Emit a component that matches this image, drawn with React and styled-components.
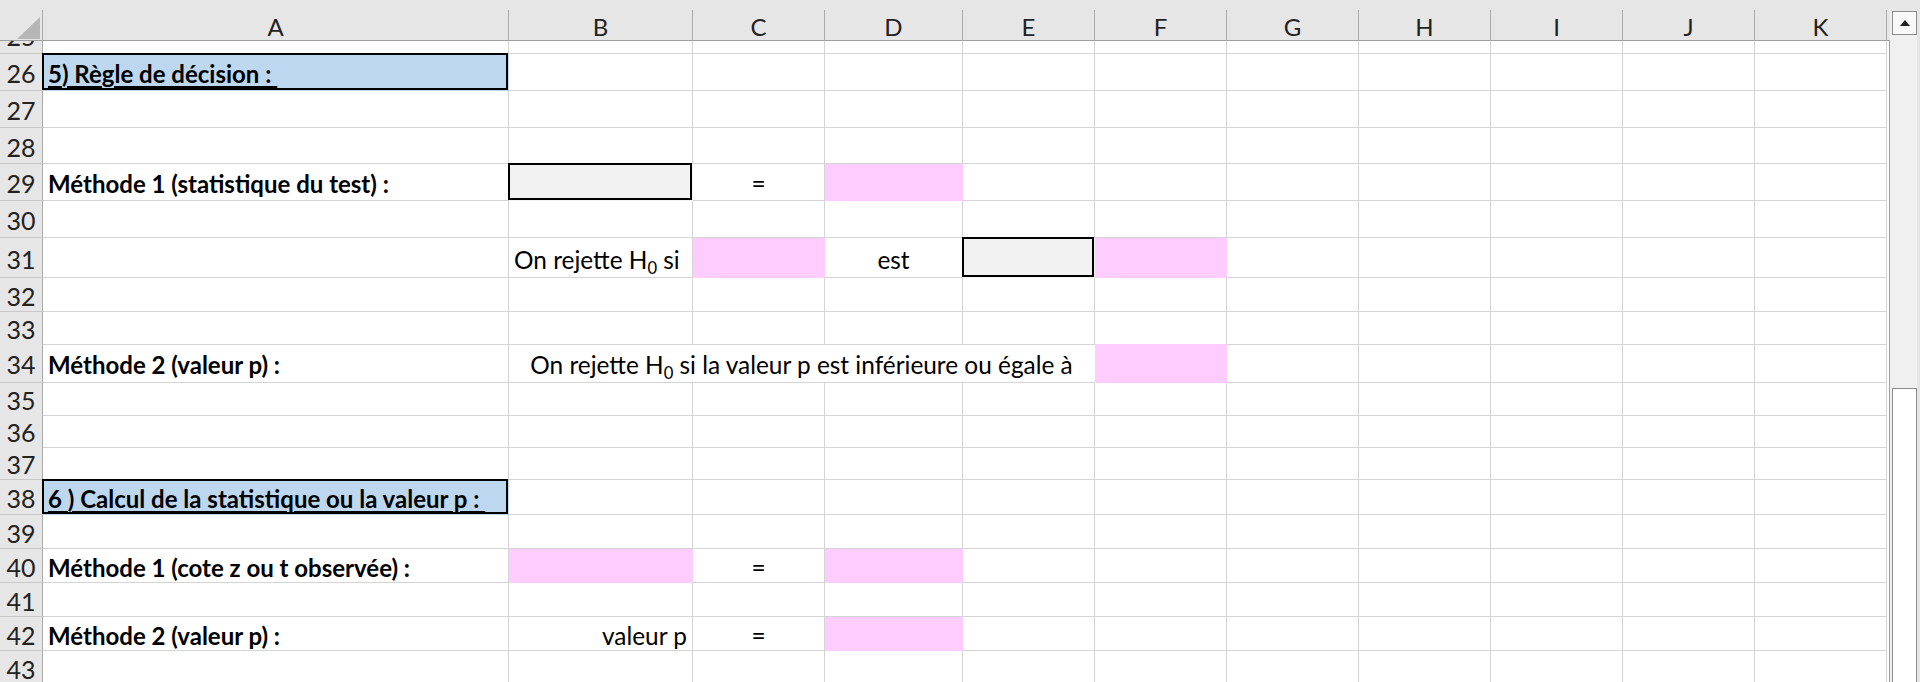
import styled, { createGlobalStyle } from 'styled-components';

const GlobalStyle = createGlobalStyle`
  html, body {
    margin: 0;
    padding: 0;
    background: #e6e6e6;
  }
  body {
    font-family: Lato, "Liberation Sans", sans-serif;
    overflow: hidden;
  }
`;

const PINK = '#ffccff';
const GREY = '#f2f2f2';
const BLUE = '#bdd7ee';

const COLUMNS = [
  { name: 'A', width: 466 },
  { name: 'B', width: 184 },
  { name: 'C', width: 132 },
  { name: 'D', width: 138 },
  { name: 'E', width: 132 },
  { name: 'F', width: 132 },
  { name: 'G', width: 132 },
  { name: 'H', width: 132 },
  { name: 'I', width: 132 },
  { name: 'J', width: 132 },
  { name: 'K', width: 132 },
];

const GRID = `43px ${COLUMNS.map((c) => `${c.width}px`).join(' ')}`;

const Sub = styled.sub`
  font-size: 0.68em;
  vertical-align: -0.28em;
  line-height: 0;
`;

const ROWS = [
  { n: 25, h: 37, offset: -24 },
  {
    n: 26,
    h: 37,
    cells: {
      A: { text: '5) Règle de décision :\u00a0', bold: true, underline: true, fill: BLUE, boxed: true },
    },
  },
  { n: 27, h: 37 },
  { n: 28, h: 36 },
  {
    n: 29,
    h: 37,
    cells: {
      A: { text: 'Méthode 1 (statistique du test) :', bold: true },
      B: { fill: GREY, boxed: true },
      C: { text: '=', align: 'center' },
      D: { fill: PINK },
    },
  },
  { n: 30, h: 37 },
  {
    n: 31,
    h: 40,
    cells: {
      B: { text: <>On rejette H<Sub>0</Sub> si</> },
      C: { fill: PINK },
      D: { text: 'est', align: 'center' },
      E: { fill: GREY, boxed: true },
      F: { fill: PINK },
    },
  },
  { n: 32, h: 34 },
  { n: 33, h: 32 },
  {
    n: 34,
    h: 39,
    cells: {
      A: { text: 'Méthode 2 (valeur p) :', bold: true },
      B: {
        span: 4,
        align: 'center',
        text: <>On rejette H<Sub>0</Sub> si la valeur p est inférieure ou égale à</>,
      },
      F: { fill: PINK },
    },
  },
  { n: 35, h: 32 },
  { n: 36, h: 32 },
  { n: 37, h: 33 },
  {
    n: 38,
    h: 35,
    cells: {
      A: {
        text: '6 ) Calcul de la statistique ou la valeur p :\u00a0',
        bold: true,
        underline: true,
        fill: BLUE,
        boxed: true,
      },
    },
  },
  { n: 39, h: 34 },
  {
    n: 40,
    h: 34,
    cells: {
      A: { text: 'Méthode 1 (cote z ou t observée) :', bold: true },
      B: { fill: PINK },
      C: { text: '=', align: 'center' },
      D: { fill: PINK },
    },
  },
  { n: 41, h: 34 },
  {
    n: 42,
    h: 34,
    cells: {
      A: { text: 'Méthode 2 (valeur p) :', bold: true },
      B: { text: 'valeur p', align: 'right' },
      C: { text: '=', align: 'center' },
      D: { fill: PINK },
    },
  },
  { n: 43, h: 34 },
];

const Window = styled.div`
  display: flex;
  height: 682px;
  overflow: hidden;
  background: #e6e6e6;
`;

const Sheet = styled.div`
  display: flex;
  flex-direction: column;
  width: 1890px;
  flex-shrink: 0;
`;

const HeaderRow = styled.div`
  display: grid;
  grid-template-columns: ${GRID} 3px;
  height: 30px;
  padding-top: 10px;
  border-bottom: 1px solid #9e9e9e;
`;

const Corner = styled.div`
  display: flex;
  justify-content: flex-end;
  align-items: flex-end;
  padding: 0 2px 2px 0;
  border-right: 1px solid #ababab;
`;

const ColHead = styled.div`
  display: flex;
  align-items: center;
  justify-content: center;
  padding-top: 2px;
  border-right: 1px solid #ababab;
  font-size: 24px;
  color: #222;
`;

const Body = styled.div`
  flex: 1;
  overflow: hidden;
  background: #fff;
  padding-right: 2px;
  border-right: 1px solid #9e9e9e;
`;

const Row = styled.div`
  display: grid;
  grid-template-columns: ${GRID};
  height: ${(p) => p.$h}px;
  margin-top: ${(p) => p.$offset || 0}px;
`;

const RowHead = styled.div`
  display: flex;
  align-items: center;
  justify-content: center;
  padding-top: 2px;
  background: #e6e6e6;
  border-right: 1px solid #ababab;
  border-bottom: 1px solid #c8c8c8;
  font-size: 25px;
  color: #222;
`;

const Cell = styled.div`
  display: flex;
  align-items: center;
  justify-content: ${(p) =>
    p.$align === 'center' ? 'center' : p.$align === 'right' ? 'flex-end' : 'flex-start'};
  grid-column: span ${(p) => p.$span || 1};
  padding: 3px 5px 0 5px;
  min-width: 0;
  background: ${(p) => p.$fill || 'transparent'};
  border-right: 1px solid ${(p) => (p.$fill ? p.$fill : p.$span ? 'transparent' : '#d4d4d4')};
  border-bottom: 1px solid ${(p) => p.$fill || '#d4d4d4'};
  font-size: ${(p) => (p.$bold ? 24 : 24.4)}px;
  font-weight: ${(p) => (p.$bold ? 700 : 400)};
  color: #000;
  white-space: pre;
  position: ${(p) => (p.$boxed ? 'relative' : 'static')};

  ${(p) =>
    p.$boxed &&
    `
    &::after {
      content: '';
      position: absolute;
      top: -1px;
      left: -1px;
      right: 0;
      bottom: 0;
      border: 2px solid #000;
      pointer-events: none;
    }
  `}
`;

const CellText = styled.span`
  text-decoration: ${(p) => (p.$underline ? 'underline' : 'none')};
  text-decoration-thickness: 2px;
  text-underline-offset: 3px;
`;

const Scrollbar = styled.div`
  display: flex;
  flex: 1;
  padding-top: 11px;
  padding-right: 3px;
`;

const Track = styled.div`
  display: flex;
  flex-direction: column;
  flex: 1;
  padding-left: 2px;
  background: #f0f0f0;
  overflow: hidden;
`;

const UpButton = styled.div`
  display: flex;
  align-items: center;
  justify-content: center;
  height: 22px;
  border: 1px solid #8c8c8c;
  background: #f9f9f9;
  flex-shrink: 0;
`;

const Thumb = styled.div`
  margin-top: 353px;
  height: 320px;
  flex-shrink: 0;
  border: 1px solid #8c8c8c;
  background: #fff;
`;

const renderCells = (row) => {
  const out = [];
  let skip = 0;
  COLUMNS.forEach((col) => {
    if (skip > 0) {
      skip -= 1;
      return;
    }
    const c = (row.cells && row.cells[col.name]) || {};
    if (c.span) skip = c.span - 1;
    out.push(
      <Cell
        key={col.name}
        $span={c.span}
        $align={c.align}
        $fill={c.fill}
        $bold={c.bold}
        $boxed={c.boxed}
      >
        {c.text && <CellText $underline={c.underline}>{c.text}</CellText>}
      </Cell>
    );
  });
  return out;
};

export default function App() {
  return (
    <>
      <GlobalStyle />
      <Window>
        <Sheet>
          <HeaderRow>
            <Corner>
              <svg width="23" height="22" viewBox="0 0 23 22">
                <polygon points="23,0 23,22 0,22" fill="#b6b6b6" />
              </svg>
            </Corner>
            {COLUMNS.map((c) => (
              <ColHead key={c.name}>{c.name}</ColHead>
            ))}
            <div />
          </HeaderRow>
          <Body>
            {ROWS.map((row) => (
              <Row key={row.n} $h={row.h} $offset={row.offset}>
                <RowHead>{row.n}</RowHead>
                {renderCells(row)}
              </Row>
            ))}
          </Body>
        </Sheet>
        <Scrollbar>
          <Track>
            <UpButton>
              <svg width="10" height="6" viewBox="0 0 10 6">
                <polygon points="5,0 10,6 0,6" fill="#222" />
              </svg>
            </UpButton>
            <Thumb />
          </Track>
        </Scrollbar>
      </Window>
    </>
  );
}
